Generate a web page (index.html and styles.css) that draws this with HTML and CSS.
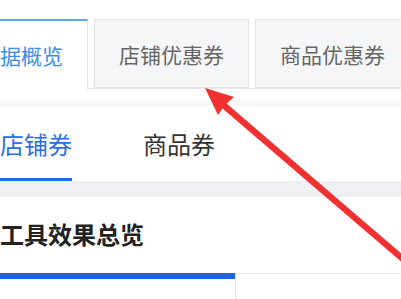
FILE: index.html
```html
<!DOCTYPE html>
<html lang="zh">
<head>
<meta charset="utf-8">
<link rel="stylesheet" href="styles.css">
</head>
<body>
<div class="page">
  <div class="top">
    <div class="tabs">
      <div class="tab active">数据概览</div>
      <div class="tab">店铺优惠券</div>
      <div class="tab">商品优惠券</div>
    </div>
  </div>
  <div class="gap-white"></div>
  <div class="band-thin"></div>
  <div class="subtabs">
    <div class="subtab on">店铺券</div>
    <div class="subtab">商品券</div>
  </div>
  <div class="band"></div>
  <div class="section">
    <h2 class="title">工具效果总览</h2>
    <div class="cards">
      <div class="card first"></div>
      <div class="card"></div>
    </div>
  </div>
  <svg class="arrow" width="401" height="299" viewBox="0 0 401 299">
    <polygon fill="#f2302f" points="205,88 234,97 226.5,103.5 430,278 426,283 222.5,108.5 218,115"/>
  </svg>
</div>
</body>
</html>
```

FILE: styles.css
```css
* { box-sizing: border-box; }
html, body { margin: 0; padding: 0; background: #fff; }
.page {
  position: relative;
  width: 401px;
  height: 299px;
  overflow: hidden;
  font-family: "Noto Sans CJK SC", "Noto Sans", sans-serif;
}
.top { padding-top: 19px; }
.tabs {
  display: flex;
  gap: 6px;
  margin-left: -46px;
  height: 70px;
  border-bottom: 1px solid #e6e8eb;
}
.tab {
  flex: none;
  height: 69px;
  padding: 0 24px;
  display: flex;
  align-items: center;
  font-size: 21px;
  color: #666;
  background: #f5f6f8;
  border: 1px solid #e3e5e8;
  white-space: nowrap;
}
.tab.active {
  color: #3a8ee6;
  background: #fff;
  border-top: 2px solid #5aa6ee;
  border-bottom: none;
  height: 70px;
}
.gap-white { height: 11px; }
.band-thin { height: 6px; background: #f7f8fa; }
.subtabs {
  display: flex;
  gap: 71px;
  height: 75px;
}
.subtab {
  display: flex;
  align-items: center;
  font-size: 24px;
  color: #333;
  border-bottom: 3px solid transparent;
  padding-top: 2px;
}
.subtab.on {
  color: #2c6ee2;
  border-bottom-color: #2c6ee2;
}
.band { height: 16px; background: #eef0f4; }
.section { padding-top: 22px; }
.title {
  margin: 0;
  font-size: 24px;
  font-weight: 700;
  color: #222;
  line-height: 30px;
  height: 30px;
}
.cards {
  display: flex;
  margin-top: 24px;
}
.card {
  height: 40px;
  flex: 1;
  border-top: 1px solid #e8e9ec;
  border-left: 1px solid #e3e5e8;
}
.card.first {
  flex: none;
  width: 235px;
  border-top: 6px solid #1f63de;
  border-left: none;
}
.arrow {
  position: absolute;
  left: 0;
  top: 0;
  pointer-events: none;
}
```
